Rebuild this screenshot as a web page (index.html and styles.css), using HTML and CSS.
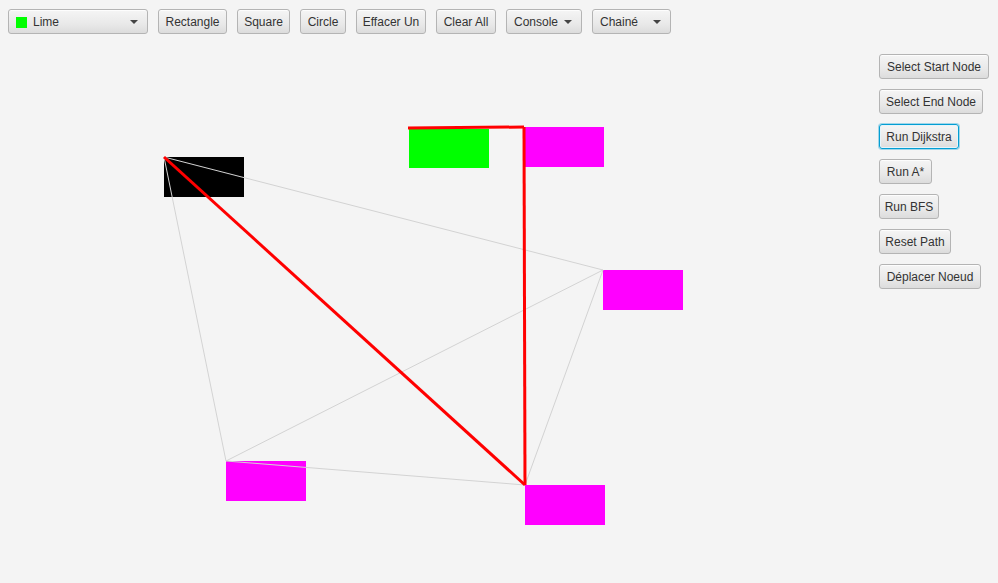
FILE: index.html
```html
<!DOCTYPE html>
<html>
<head>
<meta charset="utf-8">
<link rel="stylesheet" href="styles.css">
</head>
<body>
<div class="app">
  <div class="toolbar">
    <div class="btn combo w-combo"><span class="swatch"></span><span class="combo-label">Lime</span><span class="arrow"></span></div>
    <div class="btn w-rect">Rectangle</div>
    <div class="btn w-square">Square</div>
    <div class="btn w-circle">Circle</div>
    <div class="btn w-effacer">Effacer Un</div>
    <div class="btn w-clear">Clear All</div>
    <div class="btn menu w-console"><span class="combo-label">Console</span><span class="arrow"></span></div>
    <div class="btn menu w-chaine"><span class="combo-label">Chainé</span><span class="arrow"></span></div>
  </div>
  <div class="main">
    <svg class="canvas" width="870" height="540" viewBox="0 43 870 540">
      <rect x="164" y="157" width="80" height="40" fill="#000"/>
      <rect x="409" y="129" width="80" height="39" fill="#00ff00"/>
      <rect x="525" y="127" width="79" height="40" fill="#ff00ff"/>
      <rect x="603" y="270" width="80" height="40" fill="#ff00ff"/>
      <rect x="226" y="461" width="80" height="40" fill="#ff00ff"/>
      <rect x="525" y="485" width="80" height="40" fill="#ff00ff"/>
      <g stroke="#d3d3d3" stroke-width="1" fill="none">
        <line x1="164" y1="157" x2="603" y2="270"/>
        <line x1="164" y1="157" x2="226" y2="461"/>
        <line x1="226" y1="461" x2="603" y2="270"/>
        <line x1="226" y1="461" x2="525" y2="485"/>
        <line x1="603" y1="270" x2="525" y2="485"/>
      </g>
      <g stroke="#ff0000" stroke-width="3" fill="none">
        <line x1="164" y1="157" x2="525" y2="485"/>
        <line x1="525" y1="485" x2="524" y2="127"/>
        <line x1="524" y1="127" x2="408" y2="128"/>
      </g>
    </svg>
    <div class="sidebar">
      <div class="btn w-start">Select Start Node</div>
      <div class="btn w-end">Select End Node</div>
      <div class="btn focused w-dijkstra">Run Dijkstra</div>
      <div class="btn w-astar">Run A*</div>
      <div class="btn w-bfs">Run BFS</div>
      <div class="btn w-reset">Reset Path</div>
      <div class="btn w-move">Déplacer Noeud</div>
    </div>
  </div>
</div>
</body>
</html>
```

FILE: styles.css
```css
html, body {
  margin: 0;
  padding: 0;
  background: #f4f4f4;
  width: 998px;
  height: 583px;
  overflow: hidden;
  font-family: "Liberation Sans", Arial, sans-serif;
  font-size: 12px;
  color: #333333;
}

.app {
  display: flex;
  flex-direction: column;
  height: 583px;
}

.toolbar {
  display: flex;
  gap: 10px;
  padding: 9px 8px 9px 8px;
  height: 25px;
}

.btn {
  box-sizing: border-box;
  height: 25px;
  display: flex;
  align-items: center;
  justify-content: center;
  border: 1px solid #b4b4b4;
  border-radius: 3px;
  background: linear-gradient(#f5f5f5, #e9e9e9 60%, #dcdcdc);
  box-shadow: inset 0 1px 0 rgba(255,255,255,0.8);
  white-space: nowrap;
  flex: none;
}

.combo, .menu {
  justify-content: flex-start;
  padding-left: 7px;
  position: relative;
}

.swatch {
  width: 11px;
  height: 11px;
  background: #00ff00;
  margin-right: 6px;
  margin-top: 1px;
}

.arrow {
  position: absolute;
  right: 9px;
  top: 10px;
  width: 0;
  height: 0;
  border-left: 4px solid transparent;
  border-right: 4px solid transparent;
  border-top: 4px solid #444;
}

.w-combo { width: 140px; }
.w-rect { width: 69px; }
.w-square { width: 53px; }
.w-circle { width: 46px; }
.w-effacer { width: 70px; }
.w-clear { width: 60px; }
.w-console { width: 76px; }
.w-chaine { width: 79px; }

.main {
  display: flex;
  flex: 1;
}

.canvas {
  display: block;
  flex: none;
}

.sidebar {
  display: flex;
  flex-direction: column;
  align-items: flex-start;
  gap: 10px;
  padding: 11px 0 0 9px;
}

.w-start { width: 110px; }
.w-end { width: 104px; }
.w-dijkstra { width: 80px; }
.w-astar { width: 53px; }
.w-bfs { width: 60px; }
.w-reset { width: 72px; }
.w-move { width: 102px; }

.focused {
  border-color: #039ed3;
  box-shadow: 0 0 0 1px rgba(3,158,211,0.35), inset 0 0 0 1px #e6f4fa;
}
```
